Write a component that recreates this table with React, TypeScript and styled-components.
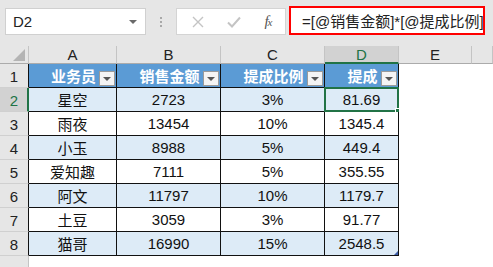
import React from 'react';
import styled, {createGlobalStyle, css} from "styled-components";

const GlobalStyle = createGlobalStyle`
  html, body {
    margin: 0;
    padding: 0;
    background: #ffffff;
    font-family: "Liberation Sans", "Noto Sans CJK SC", sans-serif;
  }
`

const CJK = `"Liberation Sans", "Noto Sans CJK SC", sans-serif`

const Page = styled.div`
  width: 493px;
  height: 267px;
  overflow: hidden;
  background: #ffffff;
`

const Toolbar = styled.div`
  height: 46px;
  background: #e6e6e6;
  display: flex;
  align-items: flex-start;
  box-sizing: border-box;
  padding: 8px 0 0 5px;
`

const NameBox = styled.div`
  width: 141px;
  height: 27px;
  box-sizing: border-box;
  background: #fff;
  border: 1px solid #d0d0d0;
  display: flex;
  align-items: center;
  justify-content: space-between;
  padding: 0 8px 0 7px;
  font-size: 15px;
  color: #222;
`

const Caret = styled.span`
  width: 0;
  height: 0;
  border-left: 4px solid transparent;
  border-right: 4px solid transparent;
  border-top: 4px solid #6a6a6a;
`

const Dots = styled.div`
  width: 30px;
  height: 27px;
  display: flex;
  flex-direction: column;
  align-items: center;
  justify-content: center;
  gap: 2px;

  > i {
    width: 2px;
    height: 2px;
    background: #a8a8a8;
  }
`

const FxBox = styled.div`
  width: 110px;
  height: 27px;
  box-sizing: border-box;
  background: #fff;
  border: 1px solid #d4d4d4;
  display: flex;
  align-items: center;
  justify-content: space-around;
  padding: 0 2px 0 4px;
`

const FxLabel = styled.span`
  font-family: "Liberation Serif", serif;
  font-style: italic;
  font-size: 15px;
  color: #555;
  letter-spacing: -1px;

  > small {
    font-size: 11px;
  }
`

const FormulaBox = styled.div`
  margin-left: 3px;
  margin-top: -2px;
  width: 196px;
  height: 29px;
  box-sizing: border-box;
  border: 2px solid #ff0000;
  background: #fff;
  display: flex;
  align-items: center;
  padding-left: 11px;
  font-size: 15px;
  font-family: ${CJK};
  color: #222;
  white-space: nowrap;
  overflow: hidden;
`

const Sheet = styled.div`
  display: grid;
  grid-template-columns: 29px 88px 104px 104px 74px 73px 1fr;
`

const ColHead = styled.div<{ $active?: boolean }>`
  height: 18px;
  box-sizing: border-box;
  background: ${p => p.$active ? '#d2d2d2' : '#e6e6e6'};
  border-right: 1px solid #c4c4c4;
  border-bottom: ${p => p.$active ? '2px solid #217346' : '1px solid #ababab'};
  color: ${p => p.$active ? '#217346' : '#222'};
  font-size: 15px;
  display: flex;
  align-items: center;
  justify-content: center;
  position: relative;
`

const Corner = styled(ColHead)`
  &::after {
    content: "";
    position: absolute;
    right: 3px;
    bottom: 2px;
    width: 0;
    height: 0;
    border-left: 12px solid transparent;
    border-bottom: 12px solid #b4b4b4;
  }
`

const RowHead = styled.div<{ $active?: boolean; $edge?: string }>`
  height: 24px;
  box-sizing: border-box;
  background: ${p => p.$active ? '#d2d2d2' : '#e6e6e6'};
  border-bottom: 1px solid #d0d0d0;
  border-right: ${p => p.$active ? '2px solid #217346' : `1px solid ${p.$edge || '#c4c4c4'}`};
  color: ${p => p.$active ? '#217346' : '#222'};
  font-size: 15px;
  display: flex;
  align-items: flex-end;
  justify-content: center;
  padding-bottom: 2px;
  padding-left: ${p => p.$active ? '1px' : '0'};
`

const Cell = styled.div<{ $kind?: 'head' | 'band' | 'plain' | 'empty'; $selected?: boolean; $handle?: boolean }>`
  height: 24px;
  box-sizing: border-box;
  position: relative;
  font-family: ${CJK};
  font-size: 15px;
  color: #111;
  display: flex;
  align-items: center;
  justify-content: center;
  ${p => p.$kind === 'empty' ? css`
    background: #fff;
  ` : css`
    border-right: 1px solid #111;
    border-bottom: 1px solid #111;
  `}
  ${p => p.$kind === 'head' && css`
    background: #5b9bd5;
    color: #fff;
    font-weight: bold;
    border-bottom-color: #111;
  `}
  ${p => p.$kind === 'band' && css`
    background: #ddebf7;
  `}
  ${p => p.$kind === 'plain' && css`
    background: #fff;
  `}
  ${p => p.$selected && css`
    &::before {
      content: "";
      position: absolute;
      left: -1px;
      top: -1px;
      right: -1px;
      bottom: -1px;
      border: 2px solid #217346;
    }
    &::after {
      content: "";
      position: absolute;
      right: -4px;
      bottom: -4px;
      width: 5px;
      height: 5px;
      background: #217346;
      border: 1px solid #fff;
    }
  `}
  ${p => p.$handle && css`
    &::after {
      content: "";
      position: absolute;
      right: 0;
      bottom: 0;
      width: 0;
      height: 0;
      border-left: 4px solid transparent;
      border-bottom: 4px solid #3f5ea8;
    }
  `}
`

const HeadText = styled.span`
  padding-left: 2px;
`

const FilterButton = styled.span`
  position: absolute;
  right: 1px;
  bottom: 1px;
  width: 16px;
  height: 15px;
  box-sizing: border-box;
  background: #f4f4f4;
  border: 1px solid #9a9a9a;
  display: flex;
  align-items: center;
  justify-content: center;

  &::after {
    content: "";
    width: 0;
    height: 0;
    border-left: 4px solid transparent;
    border-right: 4px solid transparent;
    border-top: 4px solid #555;
  }
`

const EmptyRow = styled.div`
  height: 24px;
  box-sizing: border-box;
  background: #e6e6e6;
  border-right: 1px solid #c4c4c4;
`

const rows = [
    ['星空', '2723', '3%', '81.69'],
    ['雨夜', '13454', '10%', '1345.4'],
    ['小玉', '8988', '5%', '449.4'],
    ['爱知趣', '7111', '5%', '355.55'],
    ['阿文', '11797', '10%', '1179.7'],
    ['土豆', '3059', '3%', '91.77'],
    ['猫哥', '16990', '15%', '2548.5'],
]

const headers = ['业务员', '销售金额', '提成比例', '提成']

const Cross = () => (
    <svg width="12" height="12" viewBox="0 0 12 12">
        <path d="M1 1 L11 11 M11 1 L1 11" stroke="#c4c4c4" strokeWidth="1.4"/>
    </svg>
)

const Check = () => (
    <svg width="14" height="12" viewBox="0 0 14 12">
        <path d="M1 6.5 L5 10.5 L13 1.5" stroke="#c4c4c4" strokeWidth="2" fill="none"/>
    </svg>
)

const App: React.FC = () => {
    return (
        <Page>
            <GlobalStyle/>
            <Toolbar>
                <NameBox>D2<Caret/></NameBox>
                <Dots><i/><i/><i/></Dots>
                <FxBox>
                    <Cross/>
                    <Check/>
                    <FxLabel>f<small>x</small></FxLabel>
                </FxBox>
                <FormulaBox>=[@销售金额]*[@提成比例]</FormulaBox>
            </Toolbar>
            <Sheet>
                <Corner/>
                <ColHead>A</ColHead>
                <ColHead>B</ColHead>
                <ColHead>C</ColHead>
                <ColHead $active>D</ColHead>
                <ColHead>E</ColHead>
                <ColHead/>

                <RowHead $edge="#111">1</RowHead>
                {headers.map(h => (
                    <Cell key={h} $kind="head">
                        <HeadText>{h}</HeadText>
                        <FilterButton/>
                    </Cell>
                ))}
                <Cell $kind="empty"/>
                <Cell $kind="empty"/>

                {rows.map((r, i) => (
                    <React.Fragment key={r[0]}>
                        <RowHead $active={i === 0} $edge="#111">{i + 2}</RowHead>
                        {r.map((v, j) => (
                            <Cell
                                key={j}
                                $kind={i % 2 === 0 ? 'band' : 'plain'}
                                $selected={i === 0 && j === 3}
                                $handle={i === rows.length - 1 && j === 3}
                            >{v}</Cell>
                        ))}
                        <Cell $kind="empty"/>
                        <Cell $kind="empty"/>
                    </React.Fragment>
                ))}

                <EmptyRow/>
            </Sheet>
        </Page>
    )
}

export default App;
